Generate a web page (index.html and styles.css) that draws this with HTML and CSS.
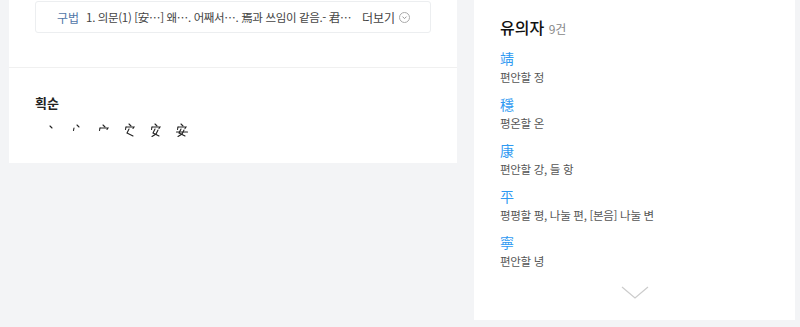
FILE: index.html
```html
<!DOCTYPE html>
<html lang="ko">
<head>
    <meta charset="UTF-8">
    <title>安 - 한자사전</title>
    <link rel="stylesheet" href="styles.css">
</head>
<body>
    <div class="page">
        <!-- 본문 -->
        <div class="main">
            <div class="section usage">
                <div class="usage-box">
                    <span class="usage-label">구법</span>
                    <span class="usage-text">1. 의문(1) [安…] 왜…. 어째서…. 焉과 쓰임이 같음.- 君…</span>
                    <span class="more">더보기
                        <svg class="more-icon" width="11" height="11" viewBox="0 0 11 11">
                            <circle cx="5.5" cy="5.5" r="5" fill="none" stroke="#aaa" stroke-width="1"/>
                            <polyline points="3.5,4.6 5.5,6.6 7.5,4.6" fill="none" stroke="#999" stroke-width="1"/>
                        </svg>
                    </span>
                </div>
            </div>
            <div class="section strokes">
                <h3>획순</h3>
                <div class="stroke-list">
                    <svg class="stroke" viewBox="0 0 14 14"><path d="M5 3 L7 5"/></svg>
                    <svg class="stroke" viewBox="0 0 14 14"><path d="M6 2 L8 4"/><path d="M3 5 L2.5 7.5"/></svg>
                    <svg class="stroke" viewBox="0 0 14 14"><path d="M6 2 L8 4"/><path d="M3 5 L2.5 7.5"/><path d="M3 5 L11 5 L10 6.5"/></svg>
                    <svg class="stroke" viewBox="0 0 14 14"><path d="M6 1 L8 3"/><path d="M3 4 L2.5 6.5"/><path d="M3 4 L11 4 L10 5.5"/><path d="M6 6 L4 10 L10 13"/></svg>
                    <svg class="stroke" viewBox="0 0 14 14"><path d="M6 1 L8 3"/><path d="M3 4 L2.5 6.5"/><path d="M3 4 L11 4 L10 5.5"/><path d="M6 6 L4 10 L10 13"/><path d="M9 7 L7 11 L3 13.5"/></svg>
                    <svg class="stroke" viewBox="0 0 14 14"><path d="M6 1 L8 3"/><path d="M3 4 L2.5 6.5"/><path d="M3 4 L11 4 L10 5.5"/><path d="M6 6 L4 10 L10 13"/><path d="M9 7 L7 11 L3 13.5"/><path d="M1.5 9 L12.5 9"/></svg>
                </div>
            </div>
        </div>

        <!-- 사이드 -->
        <div class="side">
            <h2 class="side-title">유의자 <span class="count">9건</span></h2>
            <ul class="similar">
                <li><a href="#">靖</a><p>편안할 정</p></li>
                <li><a href="#">穩</a><p>평온할 온</p></li>
                <li><a href="#">康</a><p>편안할 강, 들 항</p></li>
                <li><a href="#">平</a><p>평평할 평, 나눌 편, [본음] 나눌 변</p></li>
                <li><a href="#">寧</a><p>편안할 녕</p></li>
            </ul>
            <div class="side-more">
                <svg width="28" height="14" viewBox="0 0 28 14">
                    <polyline points="1,1 14,12 27,1" fill="none" stroke="#ccc" stroke-width="1.2"/>
                </svg>
            </div>
        </div>
    </div>
</body>
</html>
```

FILE: styles.css
```css
/* General Styles */
body {
    margin: 0;
    background: #f3f4f6;
    font-family: "Noto Sans CJK KR", "Noto Sans", sans-serif;
    color: #222;
    height: 327px;
    overflow: hidden;
}

.page {
    display: flex;
    align-items: flex-start;
    gap: 17px;
    padding-left: 9px;
}

.main {
    width: 448px;
    background: #fff;
}

.section {
    padding: 0 26px;
}

.usage {
    padding-top: 1px;
    padding-bottom: 34px;
    border-bottom: 1px solid #f0f0f0;
}

.usage-box {
    display: flex;
    align-items: center;
    height: 30px;
    border: 1px solid #eceef0;
    border-radius: 3px;
    padding: 0 20px 0 21px;
    font-size: 12px;
    white-space: nowrap;
}

.usage-label {
    color: #5176a8;
    margin-right: 7px;
}

.usage-text {
    color: #444;
    font-size: 11.5px;
    letter-spacing: -0.35px;
    flex: 1;
}

.more {
    display: flex;
    align-items: center;
    gap: 4px;
    color: #444;
    margin-left: 8px;
}

.strokes {
    height: 95px;
    padding-top: 26px;
    box-sizing: border-box;
}

.strokes h3 {
    margin: 0;
    font-size: 13px;
    font-weight: 700;
    line-height: 18px;
}

.stroke-list {
    display: flex;
    gap: 12px;
    padding-left: 10px;
    margin-top: 11px;
}

.stroke {
    width: 14px;
    height: 14px;
    fill: none;
    stroke: #222;
    stroke-width: 1.1;
    stroke-linecap: round;
}

.side {
    width: 321px;
    height: 320px;
    background: #fff;
    padding: 15px 26px 0;
    box-sizing: border-box;
}

.side-title {
    margin: 0;
    font-size: 16px;
    font-weight: 500;
    line-height: 24px;
    color: #111;
}

.count {
    font-size: 12px;
    font-weight: 400;
    color: #888;
}

.similar {
    list-style: none;
    margin: 7px 0 0;
    padding: 0;
}

.similar li {
    margin-bottom: 8px;
}

.similar a {
    display: block;
    color: #2f9af2;
    text-decoration: none;
    font-size: 14px;
    line-height: 20px;
}

.similar p {
    margin: 0;
    font-size: 11.5px;
    letter-spacing: -0.3px;
    line-height: 18px;
    color: #555;
}

.side-more {
    text-align: center;
    margin-top: 11px;
}
```
